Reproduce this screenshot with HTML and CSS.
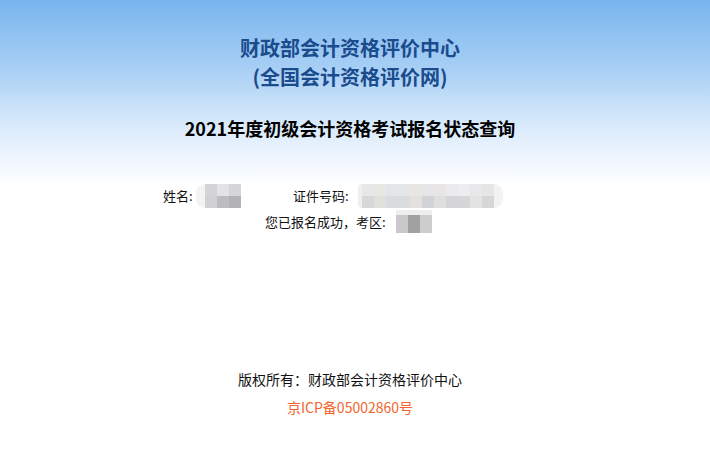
FILE: index.html
```html
<!DOCTYPE html>
<html lang="zh-CN">
<head>
<meta charset="utf-8">
<title>2021年度初级会计资格考试报名状态查询</title>
<link rel="stylesheet" href="styles.css">
</head>
<body>
<div class="page">
  <header class="head">
    <h1 class="org">财政部会计资格评价中心<br>(全国会计资格评价网)</h1>
    <h2 class="title">2021年度初级会计资格考试报名状态查询</h2>
  </header>
  <section class="info">
    <div class="row row1">
      <span class="label lname">姓名:</span>
      <span class="blur bname">
        <i class="edge-l e1"></i>
        <span class="grid g3">
          <i class="n1"></i><i class="n2"></i><i class="n3"></i>
          <i class="n4"></i><i class="n5"></i><i class="n6"></i>
        </span>
      </span>
      <span class="label lid">证件号码:</span>
      <span class="blur bid">
        <i class="edge-l e2"></i>
        <span class="grid g11">
          <i class="a1"></i><i class="a2"></i><i class="a3"></i><i class="a4"></i><i class="a5"></i><i class="a6"></i><i class="a7"></i><i class="a8"></i><i class="a9"></i><i class="a10"></i><i class="a11"></i>
          <i class="b1"></i><i class="b2"></i><i class="b3"></i><i class="b4"></i><i class="b5"></i><i class="b6"></i><i class="b7"></i><i class="b8"></i><i class="b9"></i><i class="b10"></i><i class="b11"></i>
        </span>
        <i class="edge-r e3"></i>
      </span>
    </div>
    <div class="row row2">
      <span class="label lzone">您已报名成功，考区:</span>
      <span class="blur bzone">
        <span class="grid g3z">
          <i class="z0"></i><i class="z0"></i><i class="z0"></i>
          <i class="z1"></i><i class="z2"></i><i class="z3"></i>
        </span>
      </span>
    </div>
  </section>
  <footer class="foot">
    <p class="copy">版权所有：财政部会计资格评价中心</p>
    <p class="icp">京ICP备05002860号</p>
  </footer>
</div>
</body>
</html>
```
FILE: styles.css
```css
html, body {
  margin: 0;
  padding: 0;
  background: #ffffff;
}
body {
  font-family: "Microsoft YaHei", "Noto Sans CJK SC", "Noto Sans", sans-serif;
  color: #111;
}
.page {
  width: 710px;
  height: 465px;
  background: linear-gradient(to bottom, #78b4ee 0px, #a9d0f5 70px, #d9eafb 125px, #ffffff 185px);
}
.head {
  padding-top: 33px;
  padding-right: 10px;
  text-align: center;
}
.org {
  margin: 0;
  font-size: 20px;
  line-height: 29px;
  font-weight: bold;
  color: #1a4b8d;
}
.title {
  margin: 25px 0 0;
  font-size: 18px;
  line-height: 24px;
  font-weight: bold;
  color: #000;
}
.info {
  padding-top: 44px;
  font-size: 13px;
  color: #111;
}
.row {
  display: flex;
  align-items: center;
  height: 24px;
}
.row1 {
  padding-left: 163px;
}
.row2 {
  padding-left: 265px;
  margin-top: 2px;
}
.label {
  line-height: 24px;
  white-space: nowrap;
}
.lname { width: 33px; }
.lid { margin-left: 52px; width: 65px; }
.lzone { width: 131px; }

.blur {
  display: flex;
  height: 24px;
}
.grid {
  display: grid;
  grid-auto-rows: 12px;
}
.grid i, .blur i { display: block; }
.g3 { grid-template-columns: repeat(3, 12px); }
.g11 { grid-template-columns: repeat(11, 12px); }
.g3z { grid-template-columns: repeat(3, 12px); grid-template-rows: 5px 18px; }
.edge-l { width: 9px; border-radius: 12px 0 0 12px; }
.edge-r { width: 9px; border-radius: 0 12px 12px 0; }
.e1 { background: #f3f3f1; }
.e2 { background: #eeeff0; width: 4px; }
.e3 { background: #f0f2f4; }

.n1 { background: #d4d4d6; }
.n2 { background: #e3e3e5; }
.n3 { background: #d6d6d8; }
.n4 { background: #d1d1d3; }
.n5 { background: #bdbdc0; }
.n6 { background: #b3b3b5; }

.a1 { background: #e8e8e8; }
.a2 { background: #e9e7e3; }
.a3 { background: #e3e6e8; }
.a4 { background: #e4e6e8; }
.a5 { background: #e8e6e4; }
.a6 { background: #e6e6e9; }
.a7 { background: #e8e6e4; }
.a8 { background: #ebebed; }
.a9 { background: #ededef; }
.a10 { background: #e8e8ea; }
.a11 { background: #e6e6e4; }
.b1 { background: #d8d8da; }
.b2 { background: #e2e0dc; }
.b3 { background: #d8dcde; }
.b4 { background: #dadcde; }
.b5 { background: #e3e1df; }
.b6 { background: #d2d3d6; }
.b7 { background: #e0dfdd; }
.b8 { background: #d4d5d7; }
.b9 { background: #d6d6d8; }
.b10 { background: #e3e3e3; }
.b11 { background: #d6d6d6; }

.bzone { height: 23px; align-self: flex-start; margin-top: 0; }
.z0 { background: #efefef; }
.z1 { background: #c9c9cb; }
.z2 { background: #a1a1a1; }
.z3 { background: #cdcdcd; }

.foot {
  margin-top: 134px;
  padding-right: 10px;
  text-align: center;
  font-size: 14px;
}
.copy {
  margin: 0;
  line-height: 22px;
  color: #111;
}
.icp {
  margin: 6px 0 0;
  line-height: 22px;
  color: #f2662e;
}
```
